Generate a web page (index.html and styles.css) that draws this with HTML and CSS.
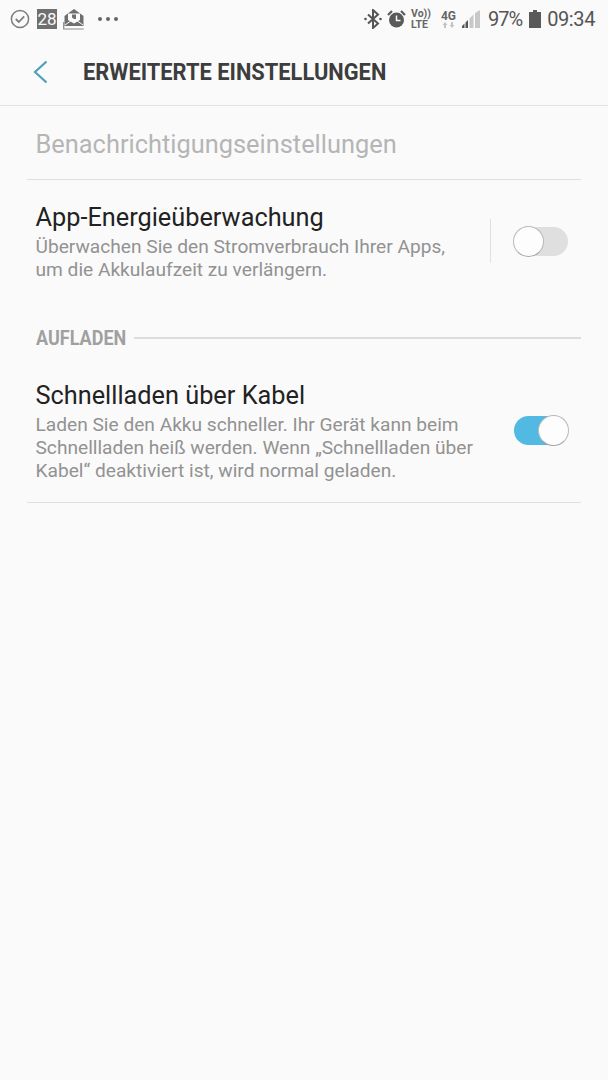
FILE: index.html
```html
<!DOCTYPE html>
<html lang="de">
<head>
    <meta charset="UTF-8">
    <meta name="viewport" content="width=device-width, initial-scale=1.0">
    <title>Erweiterte Einstellungen</title>
    <link rel="stylesheet" href="styles.css">
</head>
<body>

<div class="statusbar">
    <div class="status-left">
        <svg class="ic-check" width="20" height="20" viewBox="0 0 20 20" fill="none" stroke="#7d7d7d"><circle cx="10" cy="10" r="8.6" stroke-width="1.5"/><path d="M5.8 10l3 3 5.4-5.6" stroke-width="1.8"/></svg>
        <span class="date-badge">28</span>
        <svg class="ic-mail" width="22" height="22" viewBox="0 0 22 22"><path d="M1.500 18V8l3-2.200L11 1l6.500 4.800 3 2.200v10z" fill="#6f6f6f"/><path d="M5 5.500h12v6.500l-6 3.500-6-3.500z" fill="#fafafa"/><path d="M9 6.500h4v4.500h-2l-2-1.500z" fill="#6f6f6f"/><path d="M2 17l7-5M20 17l-7-5" fill="none" stroke="#fafafa" stroke-width="1"/><path d="M.7 14v7h20" fill="none" stroke="#8a8a8a" stroke-width="1.200"/></svg>
        <span class="dots"><i></i><i></i><i></i></span>
    </div>
    <div class="status-right">
        <svg width="18" height="20" viewBox="0 0 18 20" fill="none" stroke="#555" stroke-width="2"><path d="M4 5.500l10 9-5 4.500V1l5 4.500-10 9"/><circle cx="1.500" cy="10" r="1.300" fill="#555" stroke="none"/><circle cx="16.500" cy="10" r="1.300" fill="#555" stroke="none"/></svg>
        <svg class="ic-alarm" width="19" height="20" viewBox="0 0 19 20"><circle cx="9.500" cy="11" r="7.500" fill="#5a5a5a"/><path d="M9.500 6.500v5h4" fill="none" stroke="#fafafa" stroke-width="1.500"/><path d="M1 6l4-4M18 6l-4-4" stroke="#5a5a5a" stroke-width="2.200"/></svg>
        <span class="volte">Vo))<br>LTE</span>
        <span class="net">4G<svg width="14" height="6" viewBox="0 0 14 6"><path d="M3 0l2.500 3H4v3H2V3H.5zM10 6L7.500 3H9V0h2v3h1.500z" fill="#c4c4c4"/></svg></span>
        <svg class="ic-signal" width="18" height="18" viewBox="0 0 18 18"><path d="M0 18v-2l2.500-2.500V18zM3.500 18v-5.500L6 10v8z" fill="#555"/><path d="M7.500 18V8.500L11.500 4.500V18zM13 18V3l5-3v18z" fill="#c8c8c8"/></svg>
        <span class="pct">97%</span>
        <svg class="ic-batt" width="12" height="18" viewBox="0 0 12 18"><path d="M4 0h4v2h4v16H0V2h4z" fill="#5a5a5a"/></svg>
        <span class="time">09:34</span>
    </div>
</div>

<div class="appbar">
    <svg class="back" width="16" height="24" viewBox="0 0 16 24" fill="none" stroke="#4f9fb5" stroke-width="2.200"><path d="M14.500 1.500L3 12l11.500 10.500"/></svg>
    <h1>ERWEITERTE EINSTELLUNGEN</h1>
</div>

<div class="list">
    <div class="row-plain">Benachrichtigungseinstellungen</div>

    <div class="row row-energy">
        <div class="row-text">
            <div class="row-title">App-Energieüberwachung</div>
            <div class="row-sub">Überwachen Sie den Stromverbrauch Ihrer Apps,<br>um die Akkulaufzeit zu verlängern.</div>
        </div>
        <div class="divider"></div>
        <div class="switch"><span class="knob"></span></div>
    </div>

    <div class="section">
        <span class="section-label">AUFLADEN</span>
        <div class="section-line"></div>
    </div>

    <div class="row row-charge">
        <div class="row-text">
            <div class="row-title">Schnellladen über Kabel</div>
            <div class="row-sub">Laden Sie den Akku schneller. Ihr Gerät kann beim<br>Schnellladen heiß werden. Wenn „Schnellladen über<br>Kabel“ deaktiviert ist, wird normal geladen.</div>
        </div>
        <div class="switch on"><span class="knob"></span></div>
    </div>
</div>

</body>
</html>
```

FILE: styles.css
```css
body {
    margin: 0;
    height: 1080px;
    overflow: hidden;
    background-color: #fafafa;
    font-family: Roboto, "Liberation Sans", sans-serif;
}
.statusbar {
    height: 38px;
    display: flex;
    justify-content: space-between;
    align-items: center;
    padding: 0 13px 0 10px;
}
.status-left, .status-right {
    display: flex;
    align-items: center;
}
.date-badge {
    width: 20px;
    height: 20px;
    margin-left: 7px;
    background-color: #6f6f6f;
    color: #fafafa;
    font-size: 17px;
    line-height: 20px;
    text-align: center;
}
.ic-mail { margin-left: 6px; }
.dots {
    display: flex;
    gap: 4px;
    margin-left: 13px;
}
.dots i {
    width: 4px;
    height: 4px;
    border-radius: 50%;
    background-color: #666;
}
.ic-alarm { margin-left: 5px; }
.volte {
    margin-left: 5px;
    font-size: 10.500px;
    line-height: 11px;
    font-weight: 700;
    color: #666;
}
.net {
    display: flex;
    flex-direction: column;
    align-items: center;
    margin-left: 10px;
    font-size: 12px;
    line-height: 12px;
    font-weight: 700;
    color: #666;
}
.ic-signal { margin-left: 6px; }
.pct {
    margin-left: 8px;
    font-size: 20px;
    letter-spacing: -1px;
    color: #555;
}
.ic-batt { margin-left: 7px; }
.time {
    margin-left: 6px;
    font-size: 20px;
    letter-spacing: -0.400px;
    color: #555;
}
.appbar {
    height: 67px;
    display: flex;
    align-items: center;
    border-bottom: 1px solid #e2e2e2;
}
.back { margin-left: 32px; }
h1 {
    margin: 2px 0 0 35px;
    font-size: 23px;
    font-weight: 700;
    white-space: nowrap;
    color: #3d3d3d;
    transform: scaleX(0.95);
    transform-origin: left center;
}
.list {
    margin: 0 27px;
}
.row-plain {
    height: 73px;
    line-height: 76px;
    padding-left: 8.500px;
    border-bottom: 1px solid #e0e0e0;
    font-size: 25.400px;
    color: #b5b5b5;
}
.row {
    display: flex;
    align-items: center;
    padding-left: 8.500px;
}
.row-text { flex: 1; }
.row-title {
    font-size: 25.300px;
    line-height: 32px;
    margin-bottom: 1px;
    color: #222;
}
.row-sub {
    font-size: 19.150px;
    line-height: 23px;
    color: #929292;
}
.row-energy {
    height: 142px;
    padding-bottom: 19px;
    box-sizing: border-box;
}
.divider {
    width: 1px;
    height: 44px;
    margin-bottom: 1px;
    background-color: #e0e0e0;
    margin-right: 23px;
}
.switch {
    position: relative;
    width: 54px;
    height: 29px;
    margin-right: 13px;
    margin-bottom: 1px;
    border-radius: 15px;
    background-color: #dfdfdf;
}
.row-charge .switch { margin-bottom: 2px; }
.switch.on { background-color: #52b9e3; }
.knob {
    position: absolute;
    top: -1px;
    left: -1px;
    width: 29px;
    height: 29px;
    border-radius: 50%;
    border: 1px solid #b9b9b9;
    border-bottom-color: #a5a5a5;
    background-color: #fdfdfd;
}
.switch.on .knob { left: 24px; }
.section {
    height: 32px;
    display: flex;
    align-items: center;
    padding-left: 8.500px;
    font-size: 20px;
    font-weight: 700;
    color: #a0a0a0;
}
.section-label {
    width: 90px;
    white-space: nowrap;
    transform: scaleX(0.9);
    transform-origin: left center;
}
.section-line {
    flex: 1;
    height: 2px;
    margin-left: 8.500px;
    background-color: #dcdcdc;
}
.row-charge {
    height: 149px;
    padding-top: 6px;
    box-sizing: border-box;
    border-bottom: 1px solid #e0e0e0;
}
```
